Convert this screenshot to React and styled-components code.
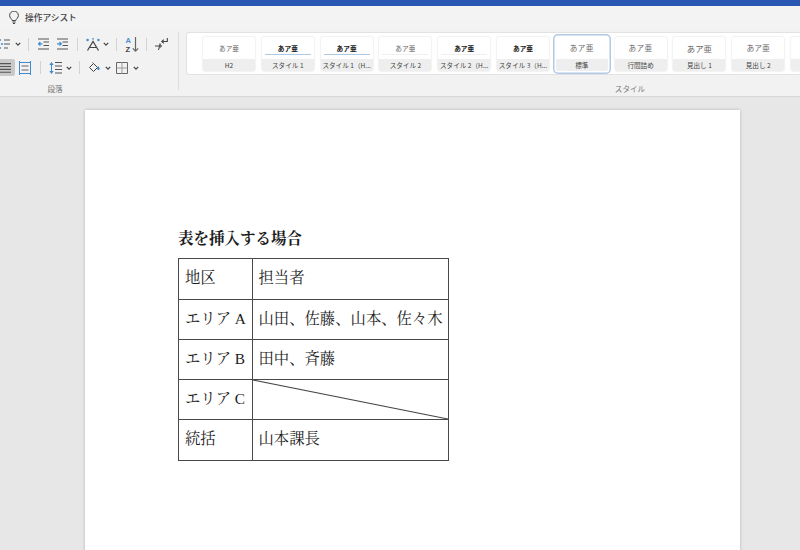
import React from "react";
import styled, { createGlobalStyle } from "styled-components";

const Global = createGlobalStyle`
  html, body { margin: 0; padding: 0; background: #e7e7e7; }
  body { font-family: "Noto Sans CJK JP", "Liberation Sans", sans-serif; }
`;

const Shell = styled.div`
  width: 800px;
  height: 550px;
  overflow: hidden;
  display: flex;
  flex-direction: column;
`;
const TitleStrip = styled.div`
  height: 6px;
  flex: none;
  background: #2a57b4;
`;
const AssistBar = styled.div`
  height: 24px;
  flex: none;
  box-sizing: border-box;
  padding: 0 0 2px 9px;
  display: flex;
  align-items: center;
  gap: 6px;
  background: #f3f3f3;
`;
const AssistText = styled.span`
  font-size: 8.7px;
  font-weight: 500;
  color: #444;
`;
const Ribbon = styled.div`
  height: 66px;
  flex: none;
  display: flex;
  background: #f2f2f2;
  border-bottom: 1px solid #d6d6d6;
  box-shadow: 0 1px 1px rgba(0, 0, 0, 0.04);
`;
const ParagraphGroup = styled.div`
  position: relative;
  width: 179px;
  flex: none;
  overflow: hidden;
  display: flex;
  flex-direction: column;
  &::after {
    content: "";
    position: absolute;
    top: 2px;
    right: 0;
    bottom: 6px;
    width: 1px;
    background: #dcdcdc;
  }
`;
const ToolRow = styled.div`
  display: flex;
  align-items: center;
  height: ${(p) => p.$h}px;
  margin-top: ${(p) => p.$mt}px;
  margin-left: -5px;
`;
const ToolIcon = styled.svg`
  flex: none;
  display: block;
  width: ${(p) => p.$w}px;
  height: ${(p) => p.$h || 14}px;
  margin-left: ${(p) => p.$ml || 0}px;
  fill: none;
  stroke: #555;
  stroke-width: 1;
`;
const Divider = styled.span`
  flex: none;
  width: 1px;
  height: 13px;
  margin-left: ${(p) => p.$ml}px;
  background: #d2d2d2;
`;
const PressedButton = styled.span`
  flex: none;
  width: 20px;
  height: 17px;
  display: flex;
  align-items: center;
  justify-content: flex-end;
  padding-right: 4px;
  box-sizing: border-box;
  background: #c9c9c9;
  border-radius: 2px;
`;
const GroupLabel = styled.div`
  margin-top: auto;
  margin-bottom: 1px;
  height: 12px;
  line-height: 12px;
  text-align: center;
  padding-left: ${(p) => p.$pl || 0}px;
  padding-right: ${(p) => p.$pr || 0}px;
  font-size: 7.6px;
  color: #777;
`;
const StylesGroup = styled.div`
  flex: 1;
  min-width: 0;
  display: flex;
  flex-direction: column;
  padding-left: 7px;
  overflow: hidden;
`;
const Gallery = styled.div`
  height: 43px;
  margin-top: 2px;
  box-sizing: border-box;
  padding: 4px 0 0 16px;
  display: flex;
  gap: 6.8px;
  background: #fff;
  border: 1px solid #e2e2e2;
  border-right: 0;
  border-radius: 3px 0 0 3px;
`;
const Card = styled.div`
  flex: none;
  width: 52px;
  height: 34px;
  border-radius: 2px;
  display: flex;
  flex-direction: column;
  overflow: hidden;
  background: #fff;
  box-shadow: ${(p) =>
    p.$selected
      ? "0 0 0 1.5px #fff, 0 0 0 3px #b3c8e6"
      : "0 0 2px rgba(0,0,0,0.18)"};
`;
const Preview = styled.div`
  height: 18px;
  flex: none;
  box-sizing: border-box;
  display: flex;
  align-items: center;
  justify-content: center;
  margin: 0 3px 4px;
  padding-top: 4px;
  font-size: ${(p) => p.$size}px;
  font-weight: ${(p) => (p.$bold ? 700 : 400)};
  letter-spacing: ${(p) => p.$track || 0}px;
  color: ${(p) => (p.$bold ? "#222" : "#666")};
  border-bottom: ${(p) => (p.$rule ? `1.5px solid ${p.$rule}` : "1.5px solid transparent")};
`;
const CardLabel = styled.div`
  flex: 1;
  display: flex;
  align-items: center;
  justify-content: center;
  padding-bottom: 1px;
  font-size: 6.6px;
  color: #444;
  white-space: nowrap;
  background: #eeeeee;
`;
const Canvas = styled.div`
  flex: 1;
  padding: 13px 0 0 85px;
  background: #e7e7e7;
`;
const Page = styled.div`
  width: 655px;
  height: 600px;
  box-sizing: border-box;
  padding: 119px 0 0 93px;
  background: #fff;
  box-shadow: 0 0 3px rgba(0, 0, 0, 0.22);
  font-family: "Liberation Serif", "Noto Serif CJK JP", "Noto Sans CJK JP", serif;
  color: #1c1c1c;
`;
const Heading = styled.div`
  font-size: 15.5px;
  line-height: 20px;
  font-weight: 700;
  margin-bottom: 9px;
`;
const Table = styled.table`
  border-collapse: collapse;
  table-layout: fixed;
  width: 270px;
  tr:first-child td,
  tr:last-child td {
    height: 41px;
  }
`;
const Cell = styled.td`
  position: relative;
  width: ${(p) => p.$w}px;
  height: 40px;
  padding: 0 0 6px ${(p) => p.$pl}px;
  box-sizing: border-box;
  border: 1px solid #484848;
  font-size: 15.35px;
  white-space: nowrap;
`;
const DiagonalLine = styled.svg`
  position: absolute;
  inset: 0;
  width: 100%;
  height: 100%;
  stroke: #484848;
  stroke-width: 1.1;
`;

const Chevron = ({ ml }) => (
  <ToolIcon $w={6} $h={6} $ml={ml} viewBox="0 0 6 6" style={{ strokeWidth: 1.2, stroke: "#444" }}>
    <path d="M.8 1.8 3 4.2l2.2-2.4" />
  </ToolIcon>
);

const ListIcon = ({ ml }) => (
  <ToolIcon $w={15} $ml={ml} viewBox="0 0 15 14">
    <path d="M9 3h6M9 7h6M9 11h4" />
    <circle cx="5" cy="3" r="1.1" fill="#4a90d0" stroke="none" />
    <circle cx="7" cy="7" r="1.1" fill="#4a90d0" stroke="none" />
    <circle cx="5" cy="11" r="1.1" fill="#4a90d0" stroke="none" />
  </ToolIcon>
);
const IndentIcon = ({ ml, flip }) => (
  <ToolIcon $w={11} $h={12} $ml={ml} viewBox="0 0 11 12">
    <path d="M0 1h11M5.5 4H11M5.5 7.5H11M0 11h11" />
    <path
      d={flip ? "M0 5.8h4M2.5 4 4.4 5.8 2.5 7.6" : "M.4 5.8h4M2.4 4 .5 5.8 2.4 7.6"}
      stroke="#3f8bd0"
      strokeWidth="1.2"
    />
  </ToolIcon>
);
const TextEffectIcon = ({ ml }) => (
  <ToolIcon $w={14} $ml={ml} viewBox="0 0 14 14" style={{ strokeWidth: 1.2 }}>
    <path d="M1.500 13.500 7 4.500l5.500 9M4 10.500h6" stroke="#444" />
    <circle cx="1.600" cy="3" r="1.300" fill="#4a90d0" stroke="none" />
    <circle cx="7" cy="1.800" r=".9" fill="#4a90d0" stroke="none" />
    <circle cx="12.400" cy="3" r="1.300" fill="#4a90d0" stroke="none" />
  </ToolIcon>
);
const SortIcon = ({ ml }) => (
  <ToolIcon $w={14} $h={17} $ml={ml} viewBox="0 0 14 17">
    <text x="0.500" y="7" fontSize="7.500" fill="#4a90d0" stroke="none" fontFamily="Liberation Sans" fontWeight="700">A</text>
    <text x="0.500" y="15.500" fontSize="7.500" fill="#444" stroke="none" fontFamily="Liberation Sans" fontWeight="700">Z</text>
    <path d="M10.500 1v14M7.800 12.300l2.700 2.900 2.700-2.900" strokeWidth="1.200" stroke="#666" />
  </ToolIcon>
);
const ReturnIcon = ({ ml }) => (
  <ToolIcon $w={13} $h={14} $ml={ml} viewBox="0 0 13 14" style={{ strokeWidth: 1.100, stroke: "#444" }}>
    <path d="M12.300 1v3.500H7M8.800 2.600 6.800 4.500l2 1.900" />
    <path d="M0 9h6.500M4.600 7.100 6.600 9l-2 1.900M5.200 6.500 3.500 13" strokeWidth="1" />
  </ToolIcon>
);
const AlignLines = () => (
  <ToolIcon $w={11} $h={10} viewBox="0 0 11 10" style={{ stroke: "#555", strokeWidth: 1.100 }}>
    <path d="M0 .6h11M0 3.500h11M0 6.400h11M0 9.300h11" />
  </ToolIcon>
);
const DistributeIcon = ({ ml }) => (
  <ToolIcon $w={12} $h={14} $ml={ml} viewBox="0 0 12 14" style={{ stroke: "#3f8bd0" }}>
    <path d="M.5 0v14M11.500 0v14" />
    <path d="M0 1.500h12M0 12.500h12" />
    <path d="M2.500 5h7M2.500 9h7" stroke="#666" />
  </ToolIcon>
);
const LineSpacingIcon = ({ ml }) => (
  <ToolIcon $w={13} $h={14} $ml={ml} viewBox="0 0 13 14">
    <path d="M6 1.500h7M6 5h7M6 8.500h7M6 12h7" />
    <path d="M2.500 3v8" stroke="#3f8bd0" />
    <path d="M.3 4 2.500 1 4.700 4zM.3 10l2.200 3 2.200-3z" fill="#3f8bd0" stroke="none" />
  </ToolIcon>
);
const FillIcon = ({ ml }) => (
  <ToolIcon $w={11} $h={12} $ml={ml} viewBox="0 0 11 12" style={{ stroke: "#444" }}>
    <path d="M4.500 1.500 8.500 5.500 4.500 9.500.5 5.500z" />
    <path d="M4.500 1.500 3.500.5" />
    <path d="M9.300 4c.8 1.300 1.400 2 1.400 2.800a1.300 1.300 0 0 1-2.600 0c0-.8.700-1.500 1.200-2.800z" fill="#3f8bd0" stroke="none" />
  </ToolIcon>
);
const BordersIcon = ({ ml }) => (
  <ToolIcon $w={12} $h={12} $ml={ml} viewBox="0 0 12 12" style={{ stroke: "#666" }}>
    <path d="M.5.500h11v11H.5z" />
    <path d="M6 .500v11M.5 6h11" stroke="#999" />
  </ToolIcon>
);

const styleCards = [
  { id: "h2", label: "H2", size: 6.7, sample: "あア亜" },
  { id: "s1", label: "スタイル 1", size: 6.7, sample: "あア亜", bold: true, rule: "#a9c9e4" },
  { id: "s1h", label: "スタイル 1（H...", size: 6.7, sample: "あア亜", bold: true, rule: "#a9c9e4" },
  { id: "s2", label: "スタイル 2", size: 6.7, sample: "あア亜", rule: "#efefef" },
  { id: "s2h", label: "スタイル 2（H...", size: 6.7, sample: "あア亜", bold: true, rule: "#efefef" },
  { id: "s3h", label: "スタイル 3（H...", size: 6.7, sample: "あア亜", bold: true },
  { id: "std", label: "標準", size: 7.6, sample: "あア亜", track: 0.5, selected: true },
  { id: "tight", label: "行間詰め", size: 7.6, sample: "あア亜", track: 0.5 },
  { id: "m1", label: "見出し 1", size: 8.4, sample: "あア亜" },
  { id: "m2", label: "見出し 2", size: 7.8, sample: "あア亜" },
  { id: "edge", label: "", size: 7.8, sample: "" },
];

const rows = [
  ["地区", "担当者"],
  ["エリア A", "山田、佐藤、山本、佐々木"],
  ["エリア B", "田中、斉藤"],
  ["エリア C", null],
  ["統括", "山本課長"],
];

export default function App() {
  return (
    <Shell>
      <Global />
      <TitleStrip />
      <AssistBar>
        <ToolIcon $w={10} $h={13} viewBox="0 0 10 13" style={{ stroke: "#444" }}>
          <path d="M3.200 9.500C3 8 .6 6.800.6 4.500a4.400 4.400 0 0 1 8.800 0c0 2.300-2.400 3.500-2.600 5z" />
          <path d="M3.300 11h3.400M4 12.500h2" />
        </ToolIcon>
        <AssistText>操作アシスト</AssistText>
      </AssistBar>
      <Ribbon>
        <ParagraphGroup>
          <ToolRow $h={14} $mt={7}>
            <ListIcon />
            <Chevron ml={5} />
            <Divider $ml={7} />
            <IndentIcon ml={9} />
            <IndentIcon ml={8} flip />
            <Divider $ml={9} />
            <TextEffectIcon ml={8} />
            <Chevron ml={3} />
            <Divider $ml={7} />
            <SortIcon ml={8} />
            <Divider $ml={7} />
            <ReturnIcon ml={8} />
          </ToolRow>
          <ToolRow $h={17} $mt={8}>
            <PressedButton>
              <AlignLines />
            </PressedButton>
            <DistributeIcon ml={4} />
            <Divider $ml={9} />
            <LineSpacingIcon ml={8} />
            <Chevron ml={4} />
            <Divider $ml={7} />
            <FillIcon ml={9} />
            <Chevron ml={5} />
            <BordersIcon ml={5} />
            <Chevron ml={5} />
          </ToolRow>
          <GroupLabel $pr={69}>段落</GroupLabel>
        </ParagraphGroup>
        <StylesGroup>
          <Gallery>
            {styleCards.map((c) => (
              <Card key={c.id} $selected={c.selected}>
                <Preview $size={c.size} $bold={c.bold} $rule={c.rule} $track={c.track}>
                  {c.sample}
                </Preview>
                <CardLabel>{c.label}</CardLabel>
              </Card>
            ))}
          </Gallery>
          <GroupLabel $pl={274}>スタイル</GroupLabel>
        </StylesGroup>
      </Ribbon>
      <Canvas>
        <Page>
          <Heading>表を挿入する場合</Heading>
          <Table>
            <tbody>
              {rows.map(([area, person]) => (
                <tr key={area}>
                  <Cell $w={74} $pl={6}>{area}</Cell>
                  <Cell $w={196} $pl={5.5}>
                    {person}
                    {person === null && (
                      <DiagonalLine viewBox="0 0 100 100" preserveAspectRatio="none">
                        <line x1="0" y1="0" x2="100" y2="100" vectorEffect="non-scaling-stroke" />
                      </DiagonalLine>
                    )}
                  </Cell>
                </tr>
              ))}
            </tbody>
          </Table>
        </Page>
      </Canvas>
    </Shell>
  );
}
